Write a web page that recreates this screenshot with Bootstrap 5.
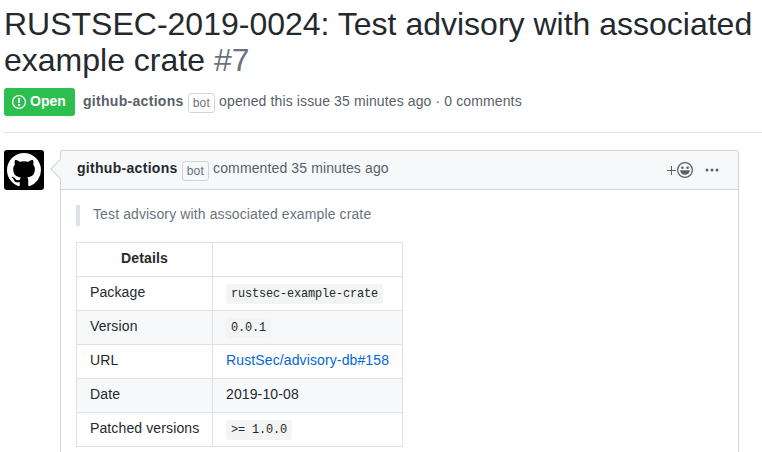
<!DOCTYPE html>
<html lang="en">
<head>
    <meta charset="UTF-8">
    <meta name="viewport" content="width=device-width, initial-scale=1">
    <title>RUSTSEC-2019-0024</title>
    <link href="https://cdn.jsdelivr.net/npm/bootstrap@5.3.0/dist/css/bootstrap.min.css" rel="stylesheet">
    <style>
        html, body { height: 452px; overflow: hidden; }
        body { font-family: "Liberation Sans", Arial, sans-serif; font-size: 14px; line-height: 1.5; color: #24292e; background: #fff; letter-spacing: .12px; }
        .issue-page { padding: 0 0 0 4px; }
        .issue-title { font-family: "Liberation Sans", Arial, sans-serif; font-size: 32px; line-height: 36px; font-weight: 400; margin: 6px 0 0; letter-spacing: 0; }
        .issue-num { color: #6a737d; }
        .issue-meta { margin-top: 10px; height: 28px; color: #586069; }
        .state-open { background: #2cbe4e; color: #fff; font-weight: 600; border-radius: 3px; height: 28px; width: 71px; padding: 0 8px; gap: 4px; margin-right: 8px; letter-spacing: 0; }
        .bot-tag { border: 1px solid #d1d5da; border-radius: 3px; font-size: 12px; line-height: 18px; padding: 0 4px; color: #6a737d; margin: 2px 4px 0; height: 20px; display: inline-block; letter-spacing: .25px; }
        .meta-author { color: #586069; font-weight: 600; letter-spacing: .3px; }
        .text-lift { margin-bottom: 2px; }
        .issue-rule { border-top: 1px solid #e1e4e8; margin: 16px 0 17px; height: 0; }
        .avatar-box { width: 40px; height: 40px; background: #000; border-radius: 3px; flex: none; }
        .timeline-box { width: 679px; margin-left: 16px; border: 1px solid #d1d5da; border-bottom: 0; border-radius: 3px 3px 0 0; position: relative; height: 320px; }
        .timeline-head { background: #f6f8fa; border-bottom: 1px solid #d1d5da; height: 39px; padding: 0 16px; color: #586069; border-radius: 3px 3px 0 0; }
        .timeline-caret { position: absolute; left: -8px; top: 11px; width: 14px; height: 14px; background: #f6f8fa; border-left: 1px solid #d1d5da; border-bottom: 1px solid #d1d5da; transform: rotate(45deg); }
        .head-author { color: #24292e; font-weight: 600; letter-spacing: .3px; }
        .head-actions { margin-left: auto; color: #586069; padding-right: 3px; }
        .head-lift { margin-bottom: 3px; }
        .plus-icon { margin-right: 1px; }
        .dots-icon { margin-left: 12px; }
        .comment-body { padding: 15px; }
        .quote-line { border-left: 4px solid #dfe2e5; color: #6a737d; padding: 0 13px; height: 21px; line-height: 19px; margin-bottom: 16px; }
        .details-table { border-collapse: collapse; width: 327px; table-layout: fixed; }
        .details-table th, .details-table td { border: 1px solid #dfe2e5; padding: 0 13px 2px; height: 34px; white-space: nowrap; }
        .details-table th { text-align: center; font-weight: 600; }
        .details-table tr:nth-child(odd) td { background: #f6f8fa; }
        .details-table .col-a { width: 136px; }
        .code-chip { font-family: "Liberation Mono", "DejaVu Sans Mono", monospace; font-size: 11.9px; letter-spacing: -.14px; background: #f3f4f4; color: #24292e; border-radius: 3px; padding: 3px 5px; }
        .details-table a { color: #0366d6; text-decoration: none; }
    </style>
</head>
<body>
<div class="issue-page">
    <h1 class="issue-title">RUSTSEC-2019-0024: Test advisory with associated example crate <span class="issue-num">#7</span></h1>

    <div class="issue-meta d-flex align-items-center">
        <span class="state-open d-flex align-items-center">
            <svg width="14" height="16" viewBox="0 0 14 16" fill="#fff"><path fill-rule="evenodd" d="M7 2.3c3.14 0 5.7 2.56 5.7 5.7s-2.56 5.7-5.7 5.7A5.71 5.71 0 011.3 8c0-3.14 2.56-5.7 5.7-5.7zM7 1C3.14 1 0 4.14 0 8s3.14 7 7 7 7-3.14 7-7-3.14-7-7-7zm1 3H6v5h2V4zm0 6H6v2h2v-2z"/></svg>
            <span class="text-lift">Open</span>
        </span>
        <span class="meta-author text-lift">github-actions</span>
        <span class="bot-tag">bot</span>
        <span class="text-lift">opened this issue 35 minutes ago · 0 comments</span>
    </div>

    <div class="issue-rule"></div>

    <div class="d-flex align-items-start">
        <div class="avatar-box d-flex align-items-center justify-content-center">
            <svg width="34" height="34" viewBox="0 0 16 16" fill="#fff"><path fill-rule="evenodd" d="M8 0C3.58 0 0 3.58 0 8c0 3.54 2.29 6.53 5.47 7.59.4.07.55-.17.55-.38 0-.19-.01-.82-.01-1.49-2.01.37-2.53-.49-2.69-.94-.09-.23-.48-.94-.82-1.13-.28-.15-.68-.52-.01-.53.63-.01 1.08.58 1.23.82.72 1.21 1.87.87 2.33.66.07-.52.28-.87.51-1.07-1.78-.2-3.64-.89-3.64-3.95 0-.87.31-1.59.82-2.15-.08-.2-.36-1.02.08-2.12 0 0 .67-.21 2.2.82.64-.18 1.32-.27 2-.27.68 0 1.36.09 2 .27 1.53-1.04 2.2-.82 2.2-.82.44 1.1.16 1.92.08 2.12.51.56.82 1.27.82 2.15 0 3.07-1.87 3.75-3.65 3.95.29.25.54.73.54 1.48 0 1.07-.01 1.93-.01 2.2 0 .21.15.46.55.38A8.013 8.013 0 0016 8c0-4.42-3.58-8-8-8z"/></svg>
        </div>
        <div class="timeline-box">
            <div class="timeline-caret"></div>
            <div class="timeline-head d-flex align-items-center position-relative">
                <span class="head-author head-lift">github-actions</span>
                <span class="bot-tag">bot</span>
                <span class="head-lift">commented 35 minutes ago</span>
                <span class="head-actions d-flex align-items-center">
                    <svg class="plus-icon" width="9" height="9" viewBox="0 0 9 9" stroke="#586069" fill="none"><path d="M0 4.5h9M4.5 0v9"/></svg>
                    <svg width="16" height="16" viewBox="0 0 16 16" fill="#586069"><path fill-rule="evenodd" d="M8 0a8 8 0 100 16A8 8 0 008 0zm0 1.3a6.7 6.7 0 110 13.400A6.700 6.700 0 018 1.300zM5.400 4.400a1.300 1.300 0 100 2.600 1.300 1.300 0 000-2.600zm5.200 0a1.300 1.300 0 100 2.600 1.300 1.300 0 000-2.600zM3.200 8.300h9.600c0 2.500-2.100 4.500-4.800 4.500S3.200 10.800 3.200 8.300z"/></svg>
                    <svg class="dots-icon" width="14" height="16" viewBox="0 0 14 16" fill="#586069"><circle cx="2" cy="8" r="1.5"/><circle cx="7" cy="8" r="1.5"/><circle cx="12" cy="8" r="1.5"/></svg>
                </span>
            </div>
            <div class="comment-body">
                <div class="quote-line">Test advisory with associated example crate</div>
                <table class="details-table">
                    <tbody>
                        <tr><th class="col-a">Details</th><th></th></tr>
                        <tr><td>Package</td><td><code class="code-chip">rustsec-example-crate</code></td></tr>
                        <tr><td>Version</td><td><code class="code-chip">0.0.1</code></td></tr>
                        <tr><td>URL</td><td><a href="#">RustSec/advisory-db#158</a></td></tr>
                        <tr><td>Date</td><td>2019-10-08</td></tr>
                        <tr><td>Patched versions</td><td><code class="code-chip">&gt;= 1.0.0</code></td></tr>
                    </tbody>
                </table>
            </div>
        </div>
    </div>
</div>
<script src="https://cdn.jsdelivr.net/npm/bootstrap@5.3.0/dist/js/bootstrap.bundle.min.js"></script>
</body>
</html>
